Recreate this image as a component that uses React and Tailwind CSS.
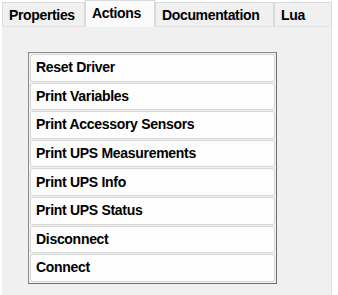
export default function App() {
  const actions = [
    "Reset Driver",
    "Print Variables",
    "Print Accessory Sensors",
    "Print UPS Measurements",
    "Print UPS Info",
    "Print UPS Status",
    "Disconnect",
    "Connect",
  ];
  const tabs = [
    { name: "Properties", w: "w-[83px]" },
    { name: "Actions", w: "w-[70px]", active: true },
    { name: "Documentation", w: "w-[119px]" },
    { name: "Lua", w: "w-[58px]" },
  ];
  return (
    <div
      className="w-[338px] h-[295px] bg-white overflow-hidden flex flex-col"
      style={{ fontFamily: '"Liberation Sans", Arial, sans-serif' }}
    >
      <div className="flex items-end h-[26px] pl-[2px] relative z-10">
        {tabs.map((t) =>
          t.active ? (
            <div
              key={t.name}
              className={`${t.w} h-[27px] -mb-[1px] bg-[#fbfbfb] border border-b-0 border-[#d9d9d9] flex items-start pl-[6px] pt-[2px] text-[14px] font-bold text-black tracking-[-0.35px]`}
            >
              {t.name}
            </div>
          ) : (
            <div
              key={t.name}
              className={`${t.w} h-[24px] bg-[#f0f0f0] border border-b-0 border-[#d9d9d9] flex items-center pl-[6px] pt-[2px] text-[14px] font-bold text-black tracking-[-0.35px]`}
            >
              {t.name}
            </div>
          )
        )}
      </div>
      <div className="ml-[2px] w-[330px] flex-1 bg-[#f0f0f0] border-r border-t border-[#e3e3e3] pt-[25px] pl-[26px]">
        <div className="w-[249px] h-[232px] border border-[#8a8a8a] border-r-[#6e6e6e] border-b-[#6e6e6e] bg-[#f0f0f0] p-[1px] flex flex-col gap-[1px]">
          {actions.map((a) => (
            <div
              key={a}
              className="h-[27.6px] bg-[#fdfdfd] border border-[#d6d6d6] rounded-[3px] flex items-center pl-[5px] text-[14px] font-bold text-black tracking-[-0.3px]"
            >
              {a}
            </div>
          ))}
        </div>
      </div>
    </div>
  );
}
